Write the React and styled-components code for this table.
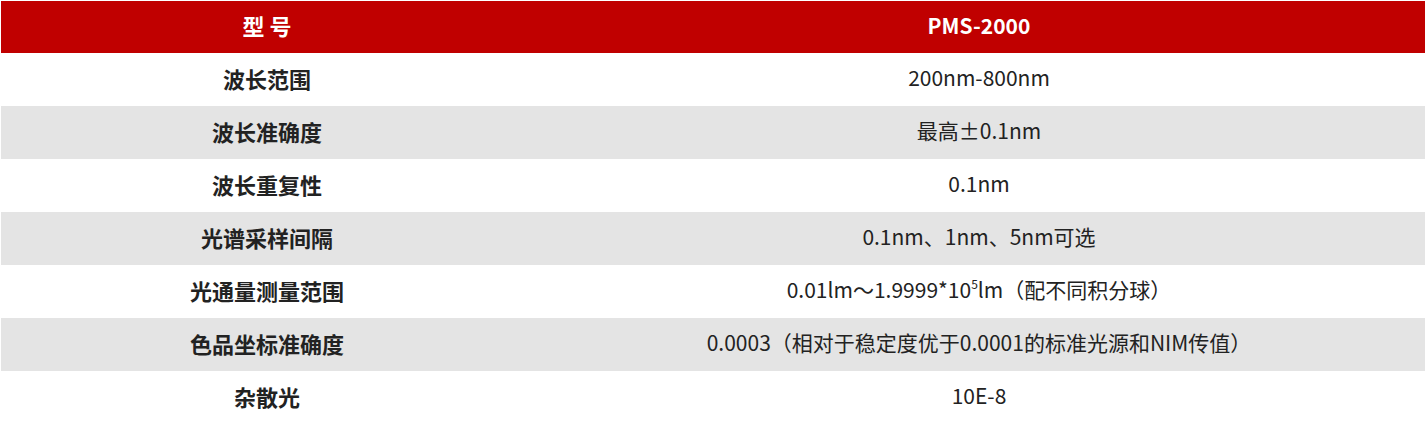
import React from 'react';
import styled, {createGlobalStyle} from 'styled-components';

const GlobalStyle = createGlobalStyle`
  html, body {
    margin: 0;
    padding: 0;
    background: #fff;
  }
  body {
    font-family: "Noto Sans CJK SC", "Noto Sans", sans-serif;
  }
`;

const Wrapper = styled.div`
  padding: 1px 0 0 1px;
`;

const Table = styled.div`
  width: 1424px;
  display: grid;
  grid-template-columns: 532px 1fr;
  grid-template-rows: 52px;
  grid-auto-rows: 53px;
`;

const Cell = styled.div`
  display: flex;
  align-items: center;
  justify-content: center;
  padding-bottom: 4px;
  font-size: ${p => (p.$label ? '22px' : '21px')};
  line-height: 1;
  color: ${p => (p.$head ? '#fff' : '#222')};
  background: ${p => (p.$head ? '#c00000' : p.$gray ? '#e4e4e4' : '#fff')};
  font-weight: ${p => (p.$head || p.$label ? 700 : 400)};
  white-space: pre;

  sup {
    font-size: 12px;
    line-height: 0;
    position: relative;
    top: -6px;
    vertical-align: baseline;
  }
`;

const rows = [
  ['波长范围', '200nm-800nm'],
  ['波长准确度', '最高±0.1nm'],
  ['波长重复性', '0.1nm'],
  ['光谱采样间隔', '0.1nm、1nm、5nm可选'],
  ['光通量测量范围', <>0.01lm～1.9999*10<sup>5</sup>lm（配不同积分球）</>],
  ['色品坐标准确度', '0.0003（相对于稳定度优于0.0001的标准光源和NIM传值）'],
  ['杂散光', '10E-8'],
];

export default function App() {
  return (
    <Wrapper>
      <GlobalStyle />
      <Table>
        <Cell $head $label>型 号</Cell>
        <Cell $head>PMS-2000</Cell>
        {rows.map(([label, value], i) => (
          <React.Fragment key={i}>
            <Cell $label $gray={i % 2 === 1}>{label}</Cell>
            <Cell $gray={i % 2 === 1}>{value}</Cell>
          </React.Fragment>
        ))}
      </Table>
    </Wrapper>
  );
}
